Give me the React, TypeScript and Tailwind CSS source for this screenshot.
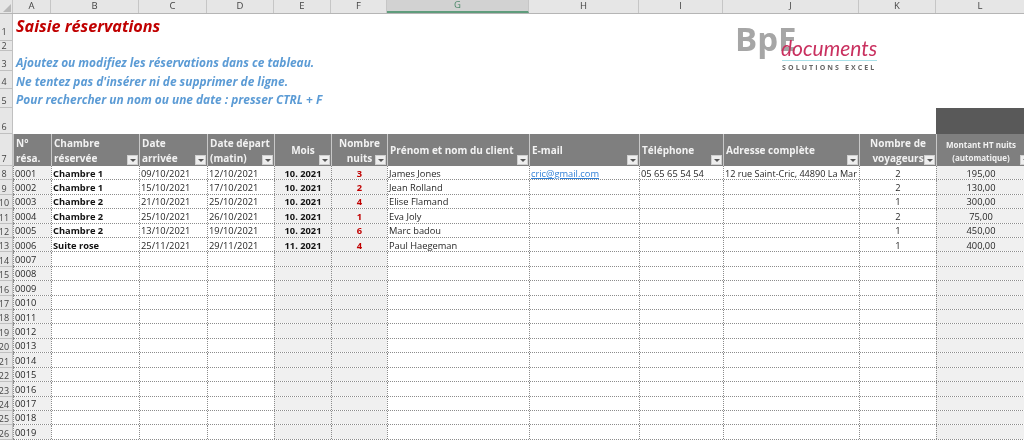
const font = "font-['Open_Sans','Noto_Sans',sans-serif]";

const colHeaders: [string, string][] = [
  ['A', 'w-[38px]'],
  ['B', 'w-[88px]'],
  ['C', 'w-[68px]'],
  ['D', 'w-[67px]'],
  ['E', 'w-[57px]'],
  ['F', 'w-[56px]'],
  ['G', 'w-[142px]'],
  ['H', 'w-[110px]'],
  ['I', 'w-[84px]'],
  ['J', 'w-[136px]'],
  ['K', 'w-[77px]'],
  ['L', 'w-[89px]'],
];

type Row = {
  room?: string;
  arrive?: string;
  depart?: string;
  month?: string;
  nights?: string;
  name?: string;
  email?: string;
  phone?: string;
  address?: string;
  guests?: string;
  amount?: string;
};

const filled: Row[] = [
  { room: 'Chambre 1', arrive: '09/10/2021', depart: '12/10/2021', month: '10. 2021', nights: '3', name: 'James Jones', email: 'cric@gmail.com', phone: '05 65 65 54 54', address: '12 rue Saint-Cric, 44890 La Mar', guests: '2', amount: '195,00' },
  { room: 'Chambre 1', arrive: '15/10/2021', depart: '17/10/2021', month: '10. 2021', nights: '2', name: 'Jean Rolland', guests: '2', amount: '130,00' },
  { room: 'Chambre 2', arrive: '21/10/2021', depart: '25/10/2021', month: '10. 2021', nights: '4', name: 'Elise Flamand', guests: '1', amount: '300,00' },
  { room: 'Chambre 2', arrive: '25/10/2021', depart: '26/10/2021', month: '10. 2021', nights: '1', name: 'Eva Joly', guests: '2', amount: '75,00' },
  { room: 'Chambre 2', arrive: '13/10/2021', depart: '19/10/2021', month: '10. 2021', nights: '6', name: 'Marc badou', guests: '1', amount: '450,00' },
  { room: 'Suite rose', arrive: '25/11/2021', depart: '29/11/2021', month: '11. 2021', nights: '4', name: 'Paul Haegeman', guests: '1', amount: '400,00' },
];

const rows: Row[] = Array.from({ length: 19 }, (_, i) => filled[i] ?? {});

function RowNum({ n, h, pb = 'pb-[2px]' }: { n: number; h: string; pb?: string }) {
  return (
    <div className={`${h} ${pb} w-[13px] shrink-0 bg-[#e6e6e6] border-b border-r border-[#c0c0c0] pr-[4px] text-[9px] leading-none text-[#444] flex items-end justify-center overflow-hidden`}>
      {n}
    </div>
  );
}

function FilterBtn({ cut }: { cut?: boolean }) {
  return (
    <span className={`absolute ${cut ? 'right-[-6px]' : 'right-[1px]'} bottom-[1px] w-[11px] h-[10px] bg-[#eeeeee] border border-[#cfcfcf] flex items-center justify-center`}>
      <span className="w-0 h-0 border-l-[3px] border-r-[3px] border-t-[3px] border-l-transparent border-r-transparent border-t-[#555]" />
    </span>
  );
}

function HeadCell({ w, children, center, filter = true, small }: { w: string; children: React.ReactNode; center?: boolean; filter?: boolean; small?: boolean }) {
  return (
    <div className={`${w} relative h-full shrink-0 overflow-hidden bg-[#7f7f7f] border-l border-[#c8c8c8] font-bold text-[#f2f2f2] px-[2px] pt-[1px] flex flex-col justify-center ${small ? 'text-[8px] leading-[13px]' : 'text-[10px] leading-[15px]'} ${center ? 'text-center' : ''}`}>
      {children}
      {filter && <FilterBtn cut={small} />}
    </div>
  );
}

function Cell({ w, className = '', children }: { w: string; className?: string; children?: React.ReactNode }) {
  return (
    <div className={`${w} h-full shrink-0 border-l border-dotted border-[#8c8c8c] px-[1px] pt-[1px] whitespace-nowrap overflow-hidden flex items-center ${className}`}>
      {children}
    </div>
  );
}

export default function App() {
  return (
    <div className={`${font} w-[1024px] h-[441px] overflow-hidden bg-white text-[#262626] relative blur-[0.3px]`}>
      {/* column letters */}
      <div className="flex h-[14px] bg-[#e6e6e6] border-b border-[#b5b5b5] text-[9.5px] text-[#444]">
        <div className="w-[13px] shrink-0 border-r border-[#c6c6c6] relative">
          <span className="absolute right-[1px] bottom-[1px] w-0 h-0 border-l-[8px] border-b-[8px] border-l-transparent border-b-[#b8b8b8]" />
        </div>
        {colHeaders.map(([name, w]) => (
          <div
            key={name}
            className={`${w} shrink-0 flex items-center justify-center border-r border-[#c6c6c6] ${name === 'G' ? 'bg-[#d2d2d2] text-[#4f8a6c] border-b-2 border-b-[#5f9c7c]' : ''}`}
          >
            {name}
          </div>
        ))}
      </div>

      {/* intro rows */}
      <div className="flex">
        <RowNum n={1} h="h-[27px]" pb="pb-[4px]" />
        <div className="pl-[3px] pb-[2px] flex items-center text-[16.2px] leading-none font-bold italic text-[#c00000]">Saisie réservations</div>
      </div>
      <div className="flex">
        <RowNum n={2} h="h-[10px]" pb="pb-0" />
      </div>
      <div className="flex">
        <RowNum n={3} h="h-[20px]" />
        <div className="pl-[3px] flex items-end pb-[2px] text-[11.9px] leading-none font-bold italic text-[#5b9bd5]">Ajoutez ou modifiez les réservations dans ce tableau.</div>
      </div>
      <div className="flex">
        <RowNum n={4} h="h-[18px]" />
        <div className="pl-[3px] flex items-end pb-[1px] text-[11.9px] leading-none font-bold italic text-[#5b9bd5]">Ne tentez pas d'insérer ni de supprimer de ligne.</div>
      </div>
      <div className="flex">
        <RowNum n={5} h="h-[19px]" />
        <div className="pl-[3px] flex items-end pb-[2px] text-[11.9px] leading-none font-bold italic text-[#5b9bd5]">Pour rechercher un nom ou une date : presser CTRL + F</div>
      </div>
      <div className="flex">
        <RowNum n={6} h="h-[26px]" />
        <div className="w-[923px] shrink-0" />
        <div className="w-[88px] shrink-0 bg-[#595959]" />
      </div>

      {/* table head */}
      <div className="flex h-[32px]">
        <RowNum n={7} h="h-[32px]" />
        <HeadCell w="w-[38px]" filter={false}><div>N°</div><div>résa.</div></HeadCell>
        <HeadCell w="w-[88px]"><div>Chambre</div><div>réservée</div></HeadCell>
        <HeadCell w="w-[68px]"><div>Date</div><div>arrivée</div></HeadCell>
        <HeadCell w="w-[67px]"><div>Date départ</div><div>(matin)</div></HeadCell>
        <HeadCell w="w-[57px]" center><div>Mois</div></HeadCell>
        <HeadCell w="w-[56px]" center><div>Nombre</div><div>nuits</div></HeadCell>
        <HeadCell w="w-[142px]"><div>Prénom et nom du client</div></HeadCell>
        <HeadCell w="w-[110px]"><div>E-mail</div></HeadCell>
        <HeadCell w="w-[84px]"><div>Téléphone</div></HeadCell>
        <HeadCell w="w-[136px]"><div>Adresse complète</div></HeadCell>
        <HeadCell w="w-[77px]" center><div>Nombre de</div><div>voyageurs</div></HeadCell>
        <HeadCell w="w-[89px]" center small><div>Montant HT nuits</div><div>(automatique)</div></HeadCell>
      </div>

      {/* table body */}
      {rows.map((r, i) => (
        <div key={i} className="flex h-[14.42px] text-[9.3px] leading-none">
          <RowNum n={i + 8} h="h-full" pb="pb-[1px]" />
          <div className="flex h-full border-b border-dotted border-[#8c8c8c]">
            <Cell w="w-[38px]" className="bg-[#f0f0f0]">{String(i + 1).padStart(4, '0')}</Cell>
            <Cell w="w-[88px]" className="font-bold text-[#111]">{r.room}</Cell>
            <Cell w="w-[68px]">{r.arrive}</Cell>
            <Cell w="w-[67px]">{r.depart}</Cell>
            <Cell w="w-[57px]" className="bg-[#f0f0f0] font-bold justify-center text-[#111]">{r.month}</Cell>
            <Cell w="w-[56px]" className="bg-[#f0f0f0] font-bold justify-center text-[#c00000]">{r.nights}</Cell>
            <Cell w="w-[142px]">{r.name}</Cell>
            <Cell w="w-[110px]" className="text-[#2f7fd6] underline">{r.email}</Cell>
            <Cell w="w-[84px]">{r.phone}</Cell>
            <Cell w="w-[136px]" className="text-[9.1px]">{r.address}</Cell>
            <Cell w="w-[77px]" className="justify-center">{r.guests}</Cell>
            <Cell w="w-[89px]" className="bg-[#f0f0f0] justify-center">{r.amount}</Cell>
          </div>
        </div>
      ))}

      {/* logo floats over the sheet */}
      <div className="absolute left-[735px] top-[22px] w-[150px] h-[52px]">
        <span className="absolute left-0 top-[-3px] text-[33px] leading-[40px] font-bold text-[#a6a6a6]">BpE</span>
        <span className="absolute left-[46px] top-[13px] text-[21px] leading-[26px] italic text-[#c9305f] font-['Lato',sans-serif]">documents</span>
        <span className="absolute left-[47px] top-[38px] w-[95px] h-px bg-[#a8e0e8]" />
        <span className="absolute left-[47px] top-[41px] text-[7px] leading-[9px] font-bold tracking-[2.1px] text-[#666] whitespace-nowrap">SOLUTIONS EXCEL</span>
      </div>
    </div>
  );
}
